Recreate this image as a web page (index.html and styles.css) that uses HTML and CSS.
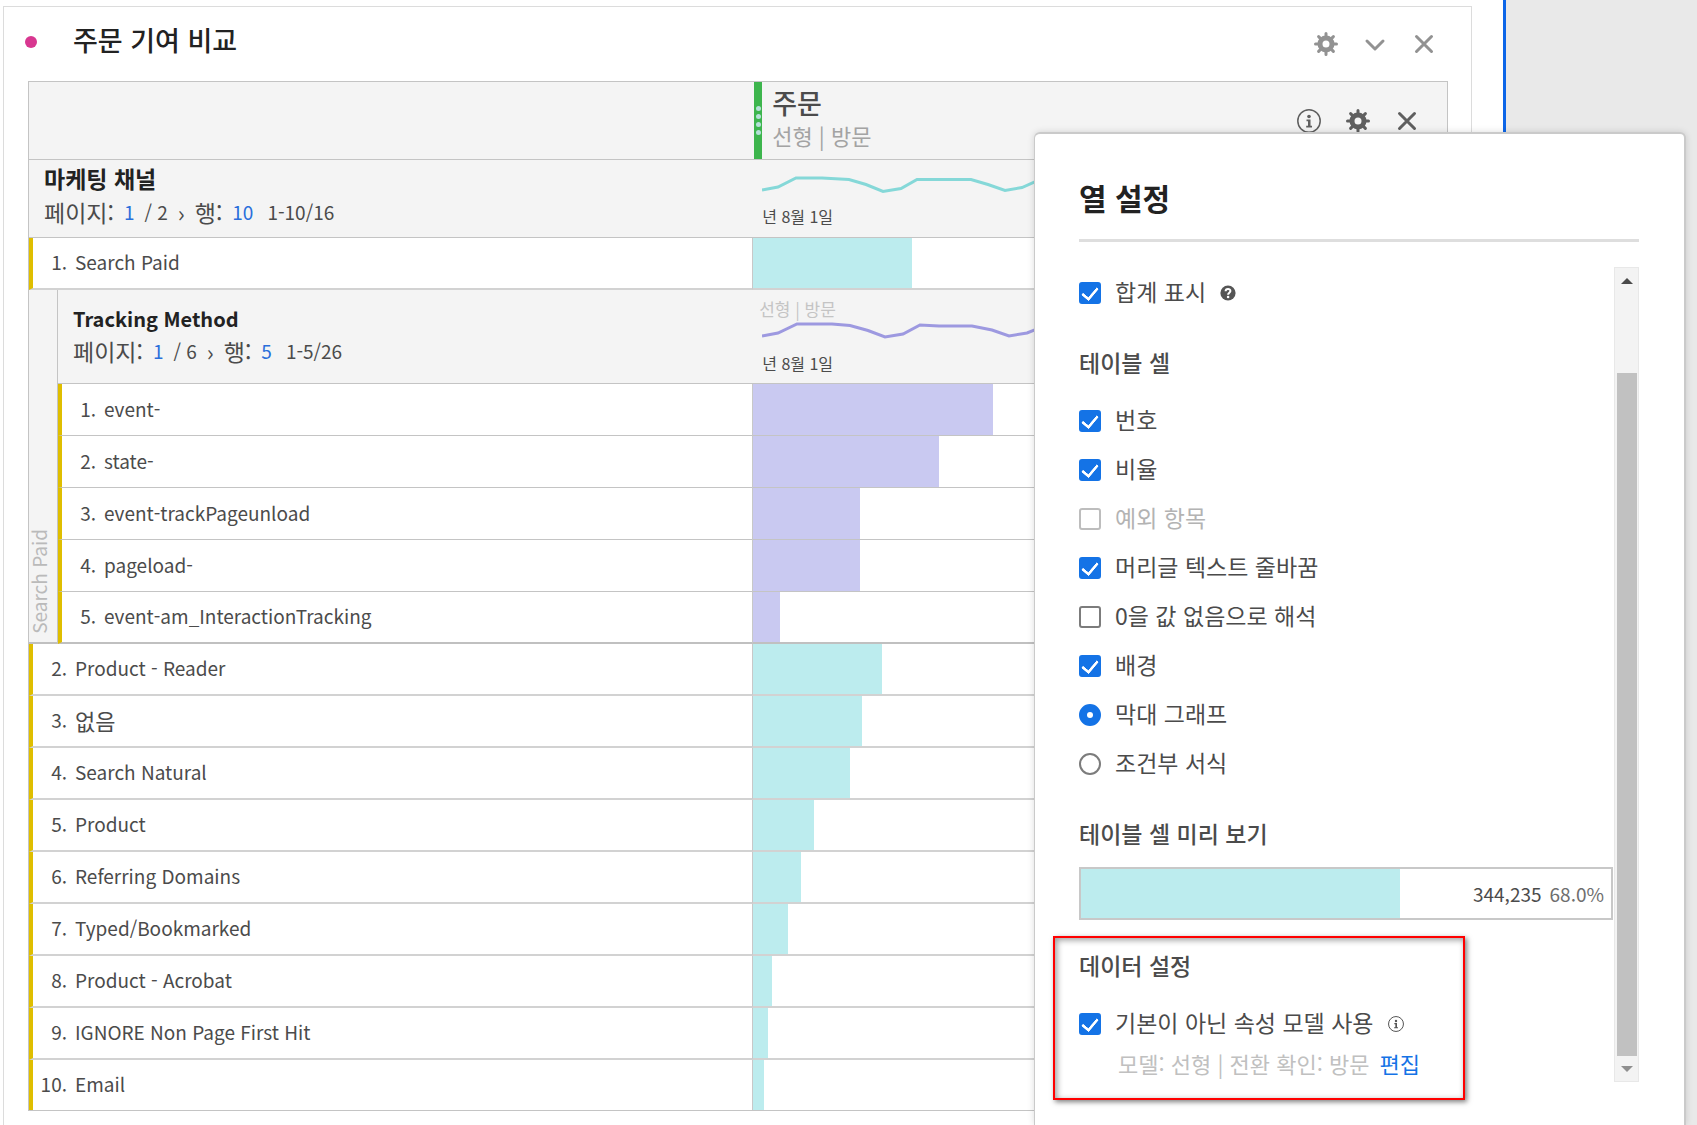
FILE: index.html
```html
<!DOCTYPE html>
<html lang="ko">
<head>
<meta charset="utf-8">
<title>주문 기여 비교</title>
<link rel="stylesheet" href="styles.css">
</head>
<body>
<svg class="sprite" aria-hidden="true">
  <symbol id="gear" viewBox="0 0 24 24">
    <g fill="none" stroke="currentColor">
      <circle cx="12" cy="12" r="6" stroke-width="5"/>
      <path stroke-width="3" stroke-linecap="round" d="M12 1.500V4M12 20v2.500M1.500 12H4M20 12h2.500M4.600 4.600l2 2M17.400 17.400l2 2M4.600 19.400l2-2M17.400 6.600l2-2"/>
    </g>
  </symbol>
  <symbol id="cross" viewBox="0 0 24 24">
    <path fill="none" stroke="currentColor" stroke-width="3" stroke-linecap="round" d="M4.500 4.500l15 15M19.500 4.500l-15 15"/>
  </symbol>
  <symbol id="chevron" viewBox="0 0 24 24">
    <path fill="none" stroke="currentColor" stroke-width="3" stroke-linecap="round" stroke-linejoin="round" d="M4 9l8 8 8-8"/>
  </symbol>
  <symbol id="info" viewBox="0 0 24 24">
    <circle cx="12" cy="12" r="11.200" fill="none" stroke="currentColor" stroke-width="1.500"/>
    <circle cx="12" cy="7.500" r="1.800" fill="currentColor"/>
    <path fill="currentColor" d="M9.500 10.500h4v6.200h1.500V18.500H9.200v-1.800h1.800v-4.400H9.500z"/>
  </symbol>
  <symbol id="help" viewBox="0 0 16 16">
    <circle cx="8" cy="8" r="7.600" fill="currentColor"/>
    <path fill="none" stroke="#fff" stroke-width="2" d="M5.600 6.300c0-3.200 4.900-3 4.800-.2 0 1.600-2.300 1.700-2.300 3.600"/>
    <circle cx="8.100" cy="12" r="1.300" fill="#fff"/>
  </symbol>
</svg>
<div class="workspace">
  <main class="canvas">
    <article class="card">
      <header class="card-head">
        <span class="dot"></span>
        <h1>주문 기여 비교</h1>
        <div class="tools tools-muted">
          <button type="button" aria-label="설정"><svg><use href="#gear"/></svg></button>
          <button type="button" aria-label="접기"><svg><use href="#chevron"/></svg></button>
          <button type="button" aria-label="닫기"><svg><use href="#cross"/></svg></button>
        </div>
      </header>
      <table class="freeform">
        <colgroup><col class="col-rail"><col><col class="col-metric"></colgroup>
        <thead>
          <tr class="metric-row">
            <th colspan="2"></th>
            <th>
              <div class="metric">
                <span class="handle"><i></i><i></i><i></i><i></i></span>
                <div class="metric-name">
                  <span class="metric-title">주문</span>
                  <span class="metric-model">선형 | 방문</span>
                </div>
                <div class="tools">
                  <button type="button" aria-label="정보"><svg class="thin"><use href="#info"/></svg></button>
                  <button type="button" aria-label="열 설정"><svg><use href="#gear"/></svg></button>
                  <button type="button" aria-label="열 닫기"><svg><use href="#cross"/></svg></button>
                </div>
              </div>
            </th>
          </tr>
        </thead>
        <tbody>
          <tr class="group-row">
            <th colspan="2">
              <div class="group">
                <span class="group-title">마케팅 채널</span>
                <div class="pager"><span class="ko">페이지:</span><button type="button">1</button><span>/ 2</span><span class="next">›</span><span class="ko">행:</span><button type="button">10</button><span class="range">1-10/16</span></div>
              </div>
            </th>
            <td>
              <div class="trend">
                <svg class="spark teal" viewBox="0 0 280 24"><path d="M0 18l16-3 18-9 26 0 27 1.500 17 5 17 7 18-3 16-9h54l17 5 17 6 17-3 20-9"/></svg>
                <span class="date">년 8월 1일</span>
              </div>
            </td>
          </tr>
          <tr class="row">
            <td colspan="2" class="name"><div class="item"><span>1.</span>Search Paid</div></td>
            <td class="value"><div class="bar" style="width:22.9%"></div></td>
          </tr>
          <tr class="group-row nested-head">
            <td rowspan="6" class="rail"><span>Search Paid</span></td>
            <th>
              <div class="group nested">
                <span class="group-title">Tracking Method</span>
                <div class="pager"><span class="ko">페이지:</span><button type="button">1</button><span>/ 6</span><span class="next">›</span><span class="ko">행:</span><button type="button">5</button><span class="range">1-5/26</span></div>
              </div>
            </th>
            <td>
              <div class="trend nested">
                <span class="trend-model">선형 | 방문</span>
                <svg class="spark violet" viewBox="0 0 280 24"><path d="M0 14l16-3 19-9h35l18 1.500 18 5 17 6.500 18-3 17-9 19 1h33l20 4 17 6 18-3 20-8"/></svg>
                <span class="date">년 8월 1일</span>
              </div>
            </td>
          </tr>
          <tr class="row sub"><td class="name"><div class="item"><span>1.</span>event-</div></td><td class="value"><div class="bar" style="width:34.5%"></div></td></tr>
          <tr class="row sub"><td class="name"><div class="item"><span>2.</span>state-</div></td><td class="value"><div class="bar" style="width:26.8%"></div></td></tr>
          <tr class="row sub"><td class="name"><div class="item"><span>3.</span>event-trackPageunload</div></td><td class="value"><div class="bar" style="width:15.4%"></div></td></tr>
          <tr class="row sub"><td class="name"><div class="item"><span>4.</span>pageload-</div></td><td class="value"><div class="bar" style="width:15.4%"></div></td></tr>
          <tr class="row sub last"><td class="name"><div class="item"><span>5.</span>event-am_InteractionTracking</div></td><td class="value"><div class="bar" style="width:3.9%"></div></td></tr>
          <tr class="row"><td colspan="2" class="name"><div class="item"><span>2.</span>Product - Reader</div></td><td class="value"><div class="bar" style="width:18.6%"></div></td></tr>
          <tr class="row"><td colspan="2" class="name"><div class="item ko-item"><span>3.</span><b>없음</b></div></td><td class="value"><div class="bar" style="width:15.7%"></div></td></tr>
          <tr class="row"><td colspan="2" class="name"><div class="item"><span>4.</span>Search Natural</div></td><td class="value"><div class="bar" style="width:13.9%"></div></td></tr>
          <tr class="row"><td colspan="2" class="name"><div class="item"><span>5.</span>Product</div></td><td class="value"><div class="bar" style="width:8.7%"></div></td></tr>
          <tr class="row"><td colspan="2" class="name"><div class="item"><span>6.</span>Referring Domains</div></td><td class="value"><div class="bar" style="width:6.9%"></div></td></tr>
          <tr class="row"><td colspan="2" class="name"><div class="item"><span>7.</span>Typed/Bookmarked</div></td><td class="value"><div class="bar" style="width:5%"></div></td></tr>
          <tr class="row"><td colspan="2" class="name"><div class="item"><span>8.</span>Product - Acrobat</div></td><td class="value"><div class="bar" style="width:2.7%"></div></td></tr>
          <tr class="row"><td colspan="2" class="name"><div class="item"><span>9.</span>IGNORE Non Page First Hit</div></td><td class="value"><div class="bar" style="width:2.2%"></div></td></tr>
          <tr class="row"><td colspan="2" class="name"><div class="item"><span>10.</span>Email</div></td><td class="value"><div class="bar" style="width:1.6%"></div></td></tr>
        </tbody>
      </table>
    </article>
  </main>

  <aside class="popover" aria-label="열 설정">
    <h2>열 설정</h2>
    <div class="popover-body">
      <form class="settings">
        <div class="option"><input type="checkbox" id="totals" checked><label for="totals">합계 표시</label><svg class="hint help"><use href="#help"/></svg></div>
        <h3>테이블 셀</h3>
        <div class="option"><input type="checkbox" id="number" checked><label for="number">번호</label></div>
        <div class="option"><input type="checkbox" id="percent" checked><label for="percent">비율</label></div>
        <div class="option"><input type="checkbox" id="anomaly" disabled><label for="anomaly">예외 항목</label></div>
        <div class="option"><input type="checkbox" id="wrap" checked><label for="wrap">머리글 텍스트 줄바꿈</label></div>
        <div class="option"><input type="checkbox" id="zero"><label for="zero">0을 값 없음으로 해석</label></div>
        <div class="option"><input type="checkbox" id="background" checked><label for="background">배경</label></div>
        <div class="option"><input type="radio" name="format" id="bars" checked><label for="bars">막대 그래프</label></div>
        <div class="option"><input type="radio" name="format" id="conditional"><label for="conditional">조건부 서식</label></div>
        <h3>테이블 셀 미리 보기</h3>
        <div class="preview"><div class="preview-fill"></div><span>344,235</span><span class="share">68.0%</span></div>
        <section class="data-settings">
          <h3>데이터 설정</h3>
          <div class="option"><input type="checkbox" id="model" checked><label for="model">기본이 아닌 속성 모델 사용</label><svg class="hint"><use href="#info"/></svg></div>
          <p class="model">모델: 선형 | 전환 확인: 방문 <a href="#">편집</a></p>
          <div class="highlight"></div>
        </section>
      </form>
      <div class="scrollbar">
        <button type="button" class="up" aria-label="위로"></button>
        <div class="thumb"></div>
        <button type="button" class="down" aria-label="아래로"></button>
      </div>
    </div>
  </aside>
</div>
</body>
</html>
```
FILE: styles.css
```css
* { box-sizing: border-box; }

body {
  margin: 0;
  background: #e9e9e9;
  color: #4b4b4b;
  font-family: "Noto Sans CJK KR", sans-serif;
  font-size: 19px;
  line-height: 24px;
}

h1, h2, h3, p { margin: 0; }

button {
  padding: 0;
  border: 0;
  background: none;
  color: inherit;
  font: inherit;
  cursor: pointer;
}

.sprite { position: absolute; width: 0; height: 0; }

.workspace {
  position: relative;
  min-height: 100vh;
  overflow: hidden;
  display: flex;
}

.canvas {
  flex: 1;
  margin-right: 191px;
  padding: 6px 31px 0 3px;
  border-right: 3px solid #0d66e8;
  background: #fff;
}

.card {
  height: 100%;
  padding: 0 23px 0 24px;
  border: 1px solid #dcdcdc;
  border-bottom: 0;
}

.card-head {
  display: flex;
  align-items: center;
  height: 74px;
  padding-right: 12px;
}

.dot {
  width: 12px;
  height: 12px;
  margin: 0 36px 4px -3px;
  border-radius: 50%;
  background: #d83790;
}

h1 {
  flex: 1;
  padding-bottom: 8px;
  color: #222;
  font-size: 27px;
  line-height: 36px;
  font-weight: 500;
}

.tools { display: flex; gap: 25px; color: #5f5f5f; }
.tools-muted { color: #929292; }
.tools button { width: 24px; height: 24px; }
.tools svg { display: block; width: 24px; height: 24px; }

.freeform {
  width: 100%;
  table-layout: fixed;
  border-spacing: 0;
  border: 1px solid #c4c4c4;
}

.freeform th, .freeform td {
  padding: 0;
  text-align: left;
  font-weight: 400;
  border-bottom: 1px solid #c4c4c4;
}

.col-rail { width: 29px; }
.col-metric { width: 49%; }

.metric-row, .group-row { background: #f4f4f4; }

.metric { display: flex; align-items: center; height: 77px; padding: 0 28px 0 2px; }

.handle {
  align-self: stretch;
  display: flex;
  flex-direction: column;
  align-items: center;
  justify-content: center;
  gap: 3px;
  width: 8px;
  background: #3db54d;
}
.handle i { width: 5px; height: 5px; border-radius: 50%; background: #b5e0d8; }

.metric-name { flex: 1; display: flex; flex-direction: column; padding: 0 0 6px 10px; }
.metric-title { font-size: 27px; line-height: 34px; font-weight: 500; }
.metric-model { color: #a3a3a3; font-size: 22px; line-height: 30px; }

.group {
  display: flex;
  flex-direction: column;
  justify-content: center;
  gap: 2px;
  height: 77px;
  padding: 0 0 8px 15px;
}
.group.nested { height: 93px; gap: 0; padding-bottom: 4px; }
.group-title { color: #222; font-size: 23px; line-height: 32px; font-weight: 700; }
.nested .group-title { font-size: 20px; }

.pager { display: flex; align-items: center; gap: 10px; line-height: 32px; }
.pager .ko { font-size: 23px; }
.pager button { color: #2a6fdb; }
.pager .next { font-size: 23px; }
.pager .range { margin-left: 4px; }

.trend { display: flex; flex-direction: column; height: 77px; padding: 12px 0 0 10px; overflow: hidden; }
.trend.nested { height: 93px; padding-top: 8px; }
.trend-model { margin-left: -3px; color: #c4c4c4; font-size: 17px; line-height: 22px; }
.trend.nested .spark { margin-top: 2px; }
.trend.nested .date { margin-top: 5px; }

.spark { flex: none; width: 280px; height: 24px; fill: none; stroke-width: 3; }
.teal { stroke: #85d8d8; }
.violet { stroke: #9d99e0; }
.date { margin-top: 8px; font-size: 16px; }

.freeform .row td { border-bottom: 2px solid #d2d2d2; }
.freeform .row.sub td { border-bottom: 1px solid #c4c4c4; }
.freeform .row.last td { border-bottom: 2px solid #c0c0c0; }
.freeform tr:last-child td { border-bottom: 0; }
.row { background: #fff; }
.freeform .name { border-left: 4px solid #dfbe00; }

.item { display: flex; align-items: center; gap: 8px; height: 50px; padding-bottom: 2px; }
.item span { width: 34px; text-align: right; }
.item b { font-size: 22px; font-weight: 400; }
.bar { height: 50px; background: #bcecee; }
.sub .item, .sub .bar { height: 51px; }
.last .item, .last .bar { height: 50px; }
.sub .bar { background: #c9c9f1; }
.freeform .value { border-left: 1px solid #c8c8c8; }

.freeform .rail {
  vertical-align: bottom;
  border-right: 1px solid #c4c4c4;
  border-bottom: 2px solid #c0c0c0;
  color: #bababa;
}
.rail span {
  display: block;
  width: 20px;
  padding-top: 8px;
  line-height: 20px;
  white-space: nowrap;
  writing-mode: vertical-rl;
  transform: rotate(180deg);
}

.popover {
  position: absolute;
  top: 132px;
  right: 11px;
  bottom: 0;
  display: flex;
  flex-direction: column;
  width: 652px;
  padding: 0 45px 43px 44px;
  border: 2px solid #cacaca;
  border-width: 2px 2px 0 1px;
  border-radius: 6px 6px 0 0;
  background: #fff;
  box-shadow: 0 0 7px rgba(0, 0, 0, .14);
}

h2 {
  padding: 41px 0 20px;
  border-bottom: 3px solid #dedede;
  color: #222;
  font-size: 30px;
  line-height: 44px;
  font-weight: 700;
}

.popover-body { flex: 1; display: flex; gap: 1px; margin-top: 25px; }
.settings { flex: 1; padding-top: 1px; }

h3 {
  margin: 29px 0 16px;
  padding-bottom: 2px;
  font-size: 23px;
  line-height: 32px;
  font-weight: 500;
}

.option { display: flex; align-items: center; gap: 14px; height: 49px; }
.option label { padding-bottom: 4px; font-size: 23px; line-height: 34px; }

.option input {
  appearance: none;
  flex: none;
  display: grid;
  place-items: center;
  width: 22px;
  height: 22px;
  margin: 0;
  border: 2px solid #7c7c7c;
  border-radius: 3px;
  background: #fff;
}
.option input[type="radio"] { border-radius: 50%; }
.option input:checked { border-color: #1473e6; background: #1473e6; }
.option input[type="checkbox"]:checked::before {
  content: "";
  width: 7px;
  height: 13px;
  margin-bottom: 4px;
  border: solid #fff;
  border-width: 0 3px 3px 0;
  border-radius: 1px;
  transform: rotate(40deg);
}
.option input[type="radio"]:checked::before {
  content: "";
  width: 6px;
  height: 6px;
  border-radius: 50%;
  background: #fff;
}
.option input:disabled { border-color: #bdbdbd; }
.option input:disabled + label { color: #b3b3b3; }
.hint { width: 16px; height: 16px; color: #555; }

.preview {
  display: flex;
  align-items: center;
  justify-content: flex-end;
  gap: 8px;
  height: 53px;
  padding-right: 7px;
  border: 2px solid #c8c8c8;
}
.preview-fill { width: 61%; height: 100%; margin-right: auto; background: #bcecee; }
.share { color: #6e6e6e; }

.data-settings { position: relative; }
.model { padding-left: 39px; color: #c0c0c0; font-size: 22px; line-height: 30px; }
.model a { margin-left: 4px; color: #1473e6; text-decoration: none; }

.highlight {
  position: absolute;
  top: -13px;
  left: -26px;
  bottom: -22px;
  width: 412px;
  border: 2px solid #f00;
  box-shadow: 2px 2px 5px rgba(0, 0, 0, .5), inset 2px 2px 6px rgba(0, 0, 0, .4);
  pointer-events: none;
}

.scrollbar {
  display: flex;
  flex-direction: column;
  align-items: center;
  width: 25px;
  border: 1px solid #e8e8e8;
  background: #f3f3f3;
}
.scrollbar button { display: grid; place-items: center; width: 100%; height: 25px; }
.scrollbar button::before { content: ""; border: 6px solid transparent; }
.scrollbar .up::before { margin-bottom: 6px; border-bottom-color: #4a4a4a; }
.scrollbar .down::before { margin-top: 6px; border-top-color: #8f8f8f; }
.thumb { flex: 1; width: 20px; margin-top: 80px; background: #c1c1c1; }
```
